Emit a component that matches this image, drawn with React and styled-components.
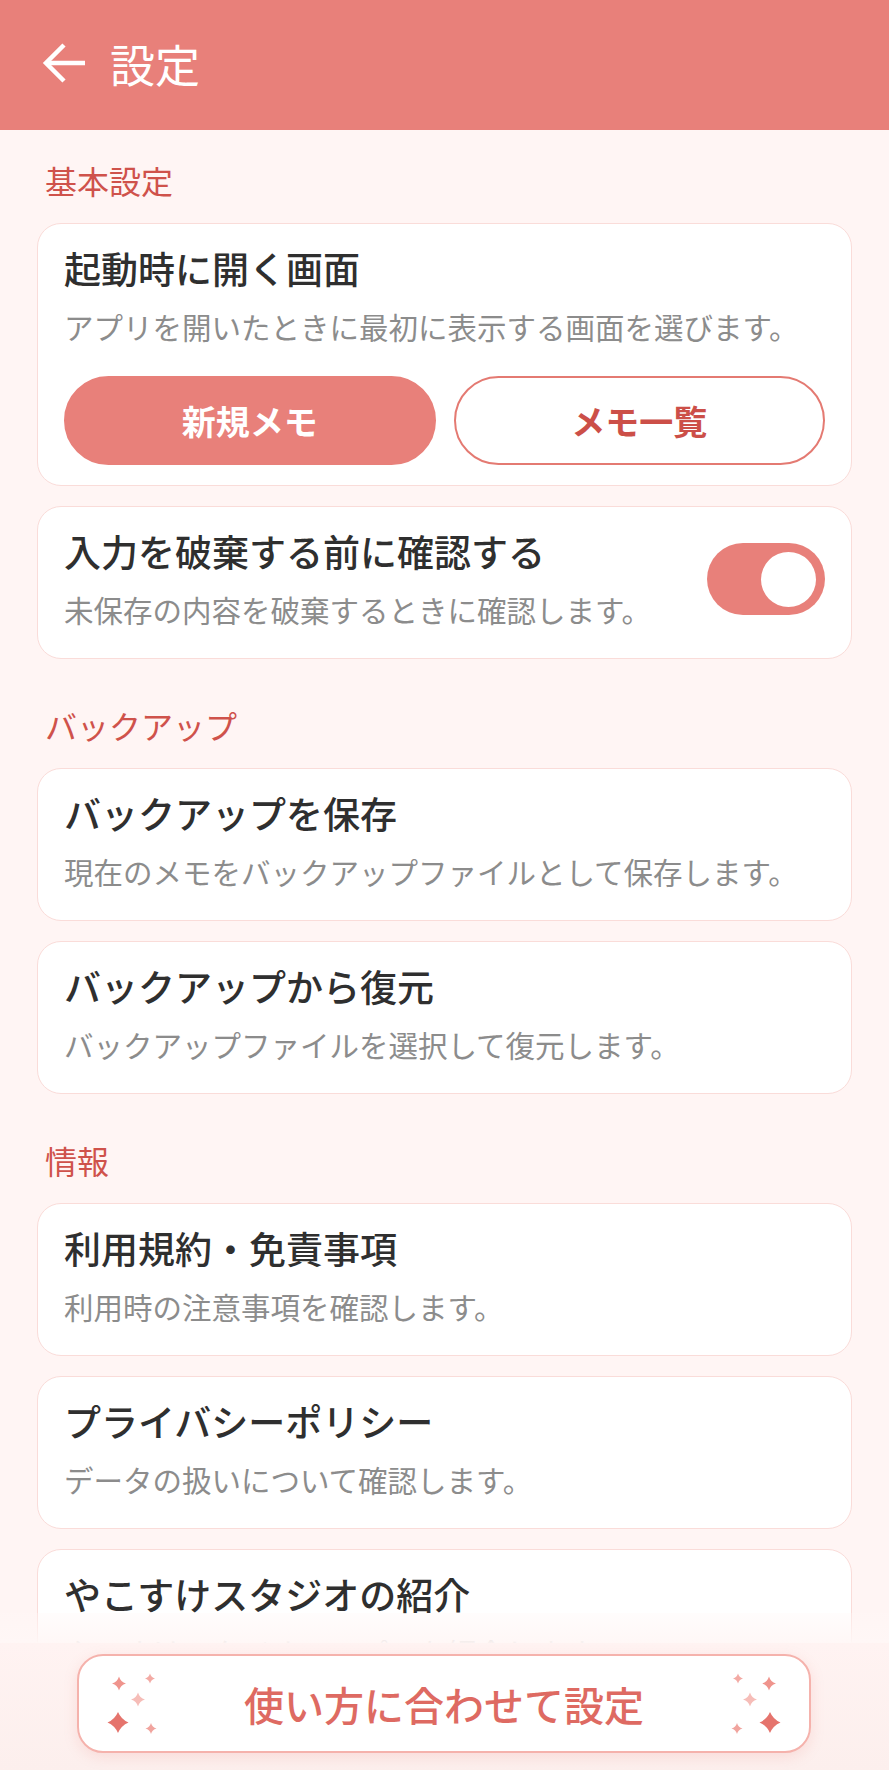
import React from "react";
import styled, { createGlobalStyle } from "styled-components";

const GlobalStyle = createGlobalStyle`
  html, body {
    margin: 0;
    padding: 0;
    background: #fff5f4;
  }
  body {
    font-family: "Noto Sans CJK JP", "Noto Sans", sans-serif;
  }
  * { box-sizing: border-box; }
`;

const sections = [
  {
    label: "基本設定",
    items: [
      { type: "choice", title: "起動時に開く画面", desc: "アプリを開いたときに最初に表示する画面を選びます。" },
      { type: "toggle", title: "入力を破棄する前に確認する", desc: "未保存の内容を破棄するときに確認します。" },
    ],
  },
  {
    label: "バックアップ",
    items: [
      { title: "バックアップを保存", desc: "現在のメモをバックアップファイルとして保存します。" },
      { title: "バックアップから復元", desc: "バックアップファイルを選択して復元します。" },
    ],
  },
  {
    label: "情報",
    items: [
      { title: "利用規約・免責事項", desc: "利用時の注意事項を確認します。" },
      { title: "プライバシーポリシー", desc: "データの扱いについて確認します。" },
      { title: "やこすけスタジオの紹介", desc: "やこすけスタジオのアプリを紹介します。" },
    ],
  },
];

const BackArrow = () => (
  <svg width="44" height="42" viewBox="0 0 44 42" fill="none">
    <path d="M43 21H5" stroke="#fff" strokeWidth="4.5" />
    <path d="M22 3L4 21L22 39" stroke="#fff" strokeWidth="4.5" strokeLinejoin="miter" />
  </svg>
);

// four-point sparkle, k sets how plump the sides are
const star = (cx, cy, r, k = 0.22) => {
  const c = r * k;
  return `M${cx} ${cy - r}Q${cx + c} ${cy - c} ${cx + r} ${cy}Q${cx + c} ${cy + c} ${cx} ${cy + r}Q${cx - c} ${cy + c} ${cx - r} ${cy}Q${cx - c} ${cy - c} ${cx} ${cy - r}Z`;
};

const Sparkles = ({ flip }) => (
  <SparkleSvg $flip={flip} width="56" height="64" viewBox="0 0 56 64">
    <path d={star(12, 11.5, 7)} fill="#ef948d" />
    <path d={star(43, 6.5, 5)} fill="#f3aaa4" />
    <path d={star(31, 27.5, 7)} fill="#f6bdb8" />
    <path d={star(11, 50.5, 10.5, 0.3)} fill="#e5746d" />
    <path d={star(44, 56.5, 5.5)} fill="#f1a49e" />
  </SparkleSvg>
);

const SettingCard = ({ item }) => {
  if (item.type === "toggle") {
    return (
      <Card>
        <ToggleRow>
          <TextBlock>
            <Title>{item.title}</Title>
            <Desc>{item.desc}</Desc>
          </TextBlock>
          <Track>
            <Thumb />
          </Track>
        </ToggleRow>
      </Card>
    );
  }
  if (item.type === "choice") {
    return (
      <Card $tight>
        <TextBlock $spaced>
          <Title>{item.title}</Title>
          <Desc>{item.desc}</Desc>
        </TextBlock>
        <ButtonRow>
          <ChoiceButton $active>新規メモ</ChoiceButton>
          <ChoiceButton>メモ一覧</ChoiceButton>
        </ButtonRow>
      </Card>
    );
  }
  return (
    <Card>
      <TextBlock>
        <Title>{item.title}</Title>
        <Desc>{item.desc}</Desc>
      </TextBlock>
    </Card>
  );
};

const App = () => {
  return (
    <Screen>
      <GlobalStyle />
      <Header>
        <BackButton>
          <BackArrow />
        </BackButton>
        <HeaderTitle>設定</HeaderTitle>
      </Header>
      <Content>
        {sections.map((section) => (
          <Section key={section.label}>
            <SectionLabel>{section.label}</SectionLabel>
            <CardList>
              {section.items.map((item) => (
                <SettingCard key={item.title} item={item} />
              ))}
            </CardList>
          </Section>
        ))}
      </Content>
      <Footer>
        <WizardButton>
          <Sparkles />
          <WizardText>使い方に合わせて設定</WizardText>
          <Sparkles flip />
        </WizardButton>
      </Footer>
    </Screen>
  );
};

const Screen = styled.div`
  height: 100vh;
  display: flex;
  flex-direction: column;
  overflow: hidden;
  background: #fff5f4;
`;

const Header = styled.header`
  flex: 0 0 130px;
  display: flex;
  align-items: center;
  padding: 0 0 4px 42px;
  gap: 24px;
  background: #e8807a;
`;

const BackButton = styled.div`
  display: flex;
  align-items: center;
  width: 44px;
  height: 42px;
`;

const HeaderTitle = styled.h1`
  margin: 0;
  color: #fff;
  font-size: 45px;
  font-weight: 400;
  line-height: 1;
`;

const Content = styled.main`
  flex: 1;
  position: relative;
  overflow: hidden;
  padding: 30px 37px 0;
  display: flex;
  flex-direction: column;
  gap: 46px;

  &::after {
    content: "";
    position: absolute;
    left: 0;
    right: 0;
    bottom: 0;
    height: 30px;
    background: linear-gradient(rgba(255, 247, 246, 0.3), rgba(255, 247, 246, 0.95));
  }
`;

const Section = styled.section`
  display: flex;
  flex-direction: column;
`;

const SectionLabel = styled.h2`
  margin: 0 0 23px 8px;
  color: #cf524b;
  font-size: 32px;
  font-weight: 400;
  line-height: 40px;
`;

const CardList = styled.div`
  display: flex;
  flex-direction: column;
  gap: 20px;
`;

const Card = styled.div`
  background: #fff;
  border: 1.5px solid #fadcd9;
  border-radius: 24px;
  padding: 22px 26px ${(p) => (p.$tight ? "20px" : "29px")};
`;

const TextBlock = styled.div`
  display: flex;
  flex-direction: column;
  gap: 16px;
  padding-bottom: ${(p) => (p.$spaced ? "8px" : "0")};
`;

const Title = styled.div`
  color: #2f2f2f;
  font-size: 37px;
  font-weight: 500;
  line-height: 44px;
`;

const Desc = styled.div`
  color: #8c8c8c;
  font-size: 29.5px;
  line-height: 40px;
  white-space: nowrap;
`;

const ButtonRow = styled.div`
  margin-top: 22px;
  display: grid;
  grid-template-columns: 1fr 1fr;
  gap: 18px;
`;

const ChoiceButton = styled.button`
  height: 89px;
  border-radius: 45px;
  font-family: inherit;
  font-size: 34px;
  font-weight: 700;
  cursor: pointer;
  border: 2.5px solid #e47a72;
  background: ${(p) => (p.$active ? "#e8807a" : "#fff")};
  border-color: ${(p) => (p.$active ? "#e8807a" : "#e47a72")};
  color: ${(p) => (p.$active ? "#fff" : "#cc4f48")};
`;

const ToggleRow = styled.div`
  display: flex;
  align-items: center;
  justify-content: space-between;
`;

const Track = styled.div`
  flex: 0 0 118px;
  height: 72px;
  border-radius: 36px;
  background: #e8807a;
  display: flex;
  align-items: center;
  justify-content: flex-end;
  padding-right: 9px;
`;

const Thumb = styled.div`
  width: 55px;
  height: 55px;
  border-radius: 50%;
  background: #fff;
`;

const Footer = styled.footer`
  flex: 0 0 127px;
  padding: 11px 78px 17px 77px;
  background: linear-gradient(#fff3f2, #fcefed);
`;

const WizardButton = styled.button`
  width: 100%;
  height: 99px;
  display: flex;
  align-items: center;
  justify-content: space-between;
  padding: 0 28px;
  border: 2px solid #f5b2ac;
  border-radius: 26px;
  background: rgba(255, 255, 255, 0.96);
  box-shadow: 0 4px 14px rgba(232, 128, 122, 0.18);
  font-family: inherit;
  cursor: pointer;
`;

const WizardText = styled.span`
  color: #de6a62;
  font-size: 40px;
  font-weight: 500;
  line-height: 1;
`;

const SparkleSvg = styled.svg`
  flex: 0 0 56px;
  transform: ${(p) => (p.$flip ? "scaleX(-1)" : "none")};
`;

export default App;
